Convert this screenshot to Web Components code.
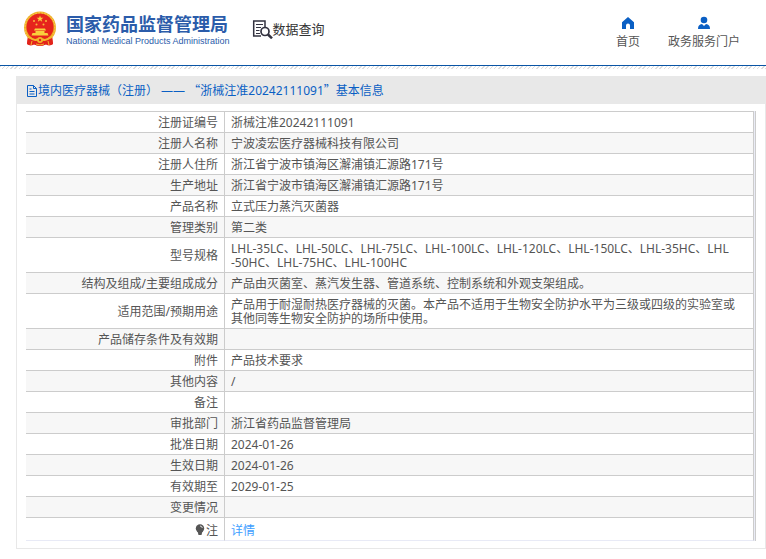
<!DOCTYPE html>
<html lang="zh-CN">
<head>
<meta charset="utf-8">
<title>数据查询</title>
<style>
body { margin: 0; background: #fff; color: #555; font: 12px/14px "Noto Sans", "Noto Sans CJK SC", sans-serif; }
</style>
</head>
<body>
<site-header>
  <nav-link slot="nav" href="#home"><svg slot="icon" viewBox="0 0 14 14" width="14" height="14"><path fill="#0a5fc4" d="M7 1 13 6.2V13H9V9.500a2 2 0 0 0-4 0V13H1V6.2Z"/></svg>首页</nav-link>
  <nav-link slot="nav" href="#portal"><svg slot="icon" viewBox="0 0 14 14" width="14" height="14"><circle cx="7" cy="4" r="3.3" fill="#0a5fc4"/><path fill="#0a5fc4" d="M1 13q0-4.600 4-4.900L7 10l2-1.900q4 .3 4 4.900Z"/></svg>政务服务门户</nav-link>
</site-header>
<info-panel>
  <span slot="title">境内医疗器械（注册） —— <q-mark>“</q-mark>浙械注准20242111091<q-mark>”</q-mark>基本信息</span>
  <record-table></record-table>
</info-panel>
<script>
class Base extends HTMLElement {
  constructor() {
    super();
    this.attachShadow({ mode: "open" }).innerHTML = this.view();
  }
}

customElements.define("q-mark", class extends Base {
  view() { return `<style>:host { display: inline; font-family: "Noto Sans CJK SC", sans-serif; }</style><slot></slot>`; }
});

customElements.define("state-emblem", class extends Base {
  view() {
    return `<style>:host { display: block; } svg { display: block; }</style>
    <svg viewBox="0 0 34 36" width="34" height="36" role="img" aria-label="国徽">
      <path fill="#e2231a" d="M5 23 4 33q3 2.500 7 .5l3 1q3 .8 6 0l3-1q4 2 7-.5l-1-10Z"/>
      <circle cx="17" cy="16.500" r="16" fill="#f0ad25"/>
      <circle cx="17" cy="16" r="13.600" fill="#e6241c"/>
      <path fill="none" stroke="#f9d45c" stroke-width="1" stroke-dasharray="1.500 1.500" d="M6 27A15 15 0 1 1 28 27"/>
      <path fill="#f9cf3d" d="m17 4.500 .9 2.300h2.500l-2 1.500.8 2.500-2.200-1.500-2.200 1.500.8-2.500-2-1.500h2.500Z"/>
      <g fill="#f9b83d"><circle cx="11" cy="10" r="1"/><circle cx="23" cy="10" r="1"/><circle cx="13.500" cy="13.500" r="1"/><circle cx="20.500" cy="13.500" r="1"/></g>
      <path fill="#f9cf3d" d="M12 17.500h10l1 2H11ZM12.500 20h9v2h3l1 2.500h-17l1-2.500h3Z"/>
      <path fill="#e2231a" d="M5 27.500h24l1 5.500q-4 2-7 0l-3 1.500h-6L11 33q-3 2-7 0Z"/>
      <path fill="none" stroke="#f3b52b" stroke-width="2" d="M6 26q5 4 8 2.500h6q3 1.500 8-2.500"/>
      <circle cx="17" cy="29" r="3" fill="#f3b52b"/><circle cx="17" cy="29" r="1.200" fill="#e2231a"/>
      <path fill="none" stroke="#f3b52b" stroke-width="1" d="m9 30-1 4M25 30l1 4M13 33q4 2 8 0"/>
    </svg>`;
  }
});

customElements.define("nav-link", class extends Base {
  view() {
    return `<style>
      :host { display: block; }
      a { display: flex; flex-direction: column; align-items: center; gap: 5px; color: #555; text-decoration: none; }
      ::slotted(svg) { display: block; }
    </style><a href="${this.getAttribute("href")}"><slot name="icon"></slot><span><slot></slot></span></a>`;
  }
});

customElements.define("site-header", class extends Base {
  view() {
    return `<style>
      :host { display: block; }
      header { display: flex; align-items: flex-start; justify-content: space-between; padding: 11px 26px 0 23px; min-height: 54px; border-bottom: 1px solid #0a55a5; }
      .left, .brand, .query, nav { display: flex; }
      .brand { gap: 9px; color: #2b5caa; }
      .names { padding-top: 3px; }
      .cn { font-size: 18px; line-height: 20px; font-weight: 700; white-space: nowrap; }
      .en { font: 9px/12px "Liberation Sans", sans-serif; padding-top: 1px; white-space: nowrap; }
      .left { gap: 22px; }
      .query { align-items: center; height: 20px; padding-top: 8px; font-size: 13px; color: #333; white-space: nowrap; }
      nav { gap: 28px; padding-top: 5px; white-space: nowrap; }
      .hatch { height: 3px; background: repeating-linear-gradient(135deg, #ddd 0 1px, #fff 1px 3px); }
    </style>
    <header>
      <div class="left">
        <div class="brand"><state-emblem></state-emblem><div class="names"><div class="cn">国家药品监督管理局</div><div class="en">National Medical Products Administration</div></div></div>
        <div class="query"><svg viewBox="0 0 21 20" width="21" height="20" fill="none" stroke="#333340"><path stroke-width="1.500" d="M9 17H1.700V2H13v6"/><path stroke-width="1" d="M4 5.500h7M4 8.500h5M4 11.500h3.500M4 14.500h4"/><circle cx="13" cy="12.500" r="4" stroke-width="1.700"/><path stroke-width="2.500" d="m16 15.500 4 3.800"/></svg><span>数据查询</span></div>
      </div>
      <nav><slot name="nav"></slot></nav>
    </header><div class="hatch"></div>`;
  }
});

customElements.define("info-panel", class extends Base {
  view() {
    return `<style>
      :host { display: block; margin: 7px 0 10px 16px; border: 1px solid #e8e8e8; }
      h1 { display: flex; align-items: center; margin: 0; height: 27px; padding-left: 9px; background: #e8e8e8; color: #0a5fc4; font-size: 12px; font-weight: 400; line-height: 14px; white-space: pre; }
      .body { padding: 7px 9px; }
    </style>
    <h1><svg viewBox="0 0 12 12" width="12" height="12" fill="none" stroke="#0a5fc4"><path d="M1.500 .5h6l3 3v8h-9ZM7.500 .5v3h3M3.500 6.500h5M3.500 9h5M3.500 4h2"/></svg><slot name="title"></slot></h1>
    <div class="body"><slot></slot></div>`;
  }
});

const ROWS = [
  ["注册证编号", "浙械注准20242111091"],
  ["注册人名称", "宁波凌宏医疗器械科技有限公司"],
  ["注册人住所", "浙江省宁波市镇海区澥浦镇汇源路171号"],
  ["生产地址", "浙江省宁波市镇海区澥浦镇汇源路171号"],
  ["产品名称", "立式压力蒸汽灭菌器"],
  ["管理类别", "第二类"],
  ["型号规格", "LHL-35LC、LHL-50LC、LHL-75LC、LHL-100LC、LHL-120LC、LHL-150LC、LHL-35HC、LHL\n-50HC、LHL-75HC、LHL-100HC"],
  ["结构及组成/主要组成成分", "产品由灭菌室、蒸汽发生器、管道系统、控制系统和外观支架组成。"],
  ["适用范围/预期用途", "产品用于耐湿耐热医疗器械的灭菌。本产品不适用于生物安全防护水平为三级或四级的实验室或\n其他同等生物安全防护的场所中使用。"],
  ["产品储存条件及有效期", ""],
  ["附件", "产品技术要求"],
  ["其他内容", "/"],
  ["备注", ""],
  ["审批部门", "浙江省药品监督管理局"],
  ["批准日期", "2024-01-26"],
  ["生效日期", "2024-01-26"],
  ["有效期至", "2029-01-25"],
  ["变更情况", ""],
  [`<svg viewBox="0 0 10 12" width="10" height="12"><circle cx="5" cy="4.500" r="4.200" fill="#555"/><path fill="#555" d="M2.500 7h5L6.500 11h-3Z"/><path fill="none" stroke="#ddd" d="M5 2q2 0 2.300 2"/></svg>注`, `<a href="#details">详情</a>`]
];

customElements.define("record-table", class extends Base {
  view() {
    return `<style>
      :host { display: block; border-right: 1px solid #ccc; padding-right: 1px; background: #eaecf6; }
      table { width: 100%; table-layout: fixed; border-collapse: separate; border-spacing: 0; background: #fff; border-top: 1px solid #ccc; }
      col.label { width: 199px; }
      tr:nth-child(even) { background: #f7f7f7; }
      th, td { height: 14px; padding: 4px 6px 2px; border-right: 1px solid #ccc; border-bottom: 1px solid #ccc; font-weight: 400; vertical-align: middle; }
      th { text-align: right; }
      td { text-align: left; white-space: pre-line; }
      tr:last-child > * { padding: 6px 6px 2px; border-bottom-color: #e8eaf6; }
      svg { vertical-align: -1px; margin-right: 1px; }
      a { color: #409eff; text-decoration: none; }
    </style>
    <table><colgroup><col class="label"><col></colgroup><tbody>${ROWS.map(([k, v]) => `<tr><th scope="row">${k}</th><td>${v}</td></tr>`).join("")}</tbody></table>`;
  }
});
</script>
</body>
</html>
